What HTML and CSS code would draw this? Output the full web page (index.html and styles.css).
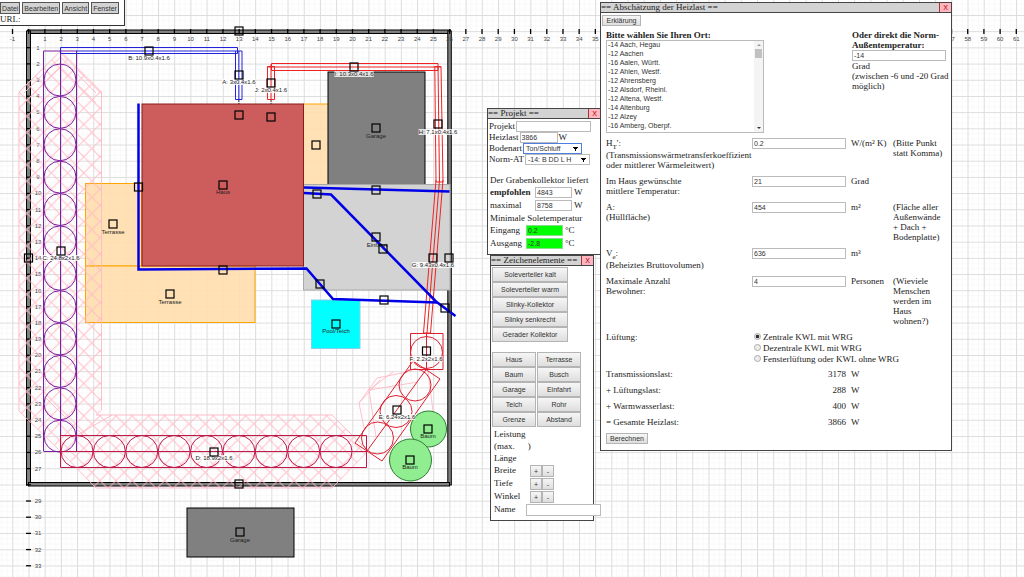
FILE: index.html
```html
<!DOCTYPE html>
<html lang="de">
<head>
  <meta charset="UTF-8" />
  <meta name="viewport" content="width=device-width, initial-scale=1.0"/>
  <title>Grabenkollektor Planer</title>
  <link rel="stylesheet" href="styles.css">
</head>
<body>
  <svg id="plan" class="plan">
    <defs>
      <pattern id="grid" x="28.5" y="31.2" width="16.19" height="16.19" patternUnits="userSpaceOnUse">
        <path class="grid-fine" d="M5.4 0V16.19M10.8 0V16.19M0 5.4H16.19M0 10.8H16.19"/>
        <path class="grid-line" d="M0.5 0V16.19M0 0.5H16.19"/>
      </pattern>
      <pattern id="hatch" x="19" y="92" width="16.19" height="16.19" patternUnits="userSpaceOnUse">
        <path class="frost" d="M0 0L16.19 16.19M16.19 0L0 16.19"/>
      </pattern>
    </defs>
    <rect width="100%" height="100%" fill="url(#grid)"/>

    <!-- Grundstücksgrenze -->
    <g class="border">
      <rect x="27.5" y="30" width="423" height="3.5"/>
      <rect x="26.5" y="31" width="4" height="454"/>
      <rect x="447.8" y="31" width="3.5" height="454"/>
      <rect x="28.5" y="482.5" width="421" height="3.5"/>
    </g>
    <g id="axis" class="axis"></g>

    <!-- Gebäude und Flächen -->
    <g class="terrace">
      <rect x="85.5" y="183.5" width="56" height="82.5"/>
      <rect x="85.5" y="266" width="169.5" height="56.5"/>
      <rect x="303.5" y="104" width="25" height="81"/>
    </g>
    <rect class="garage" x="328" y="72" width="97" height="113"/>
    <rect class="drive" x="303.5" y="184.5" width="146.5" height="105.5"/>
    <rect class="house" x="142" y="104" width="161.5" height="162"/>
    <rect class="pond" x="311.5" y="300" width="48.5" height="48.5"/>
    <rect class="garage" x="187" y="508" width="107" height="49"/>

    <!-- Frostbereich -->
    <path class="frost" fill="url(#hatch)" d="M60.5 51L101.5 92V410L96 415H332L368 451L332 488H96L60 451L19 411V92Z"/>
    <path class="frost" fill="none" d="M60.5 57L96 93M60.5 67L96 103M60.5 57L24 93M60.5 67L24 103M43 395L85 437M77 435L112 415"/>
    <path class="frost" fill="none" d="M412 371L377 378L359 403L364 428M418 382L369 390L376 437M369 390L393 372M433 411L428 371M359 403L380 380M421 437L433 411"/>

    <g class="tree">
      <circle cx="428.5" cy="429" r="18"/>
      <circle cx="410.5" cy="460" r="21"/>
    </g>

    <!-- Kollektoren -->
    <g id="slinkyC" class="slinky indigo"><path d="M43.5 51V451M60.5 51V451M76.5 51V451M43.5 51H76.5M43.5 451.5H77"/></g>
    <g id="slinkyD" class="slinky crimson"><path d="M60.5 435.5H366.5V467.5H60.5ZM60.5 451.5H366.5"/></g>
    <g class="slinky red">
      <path d="M410.5 333.5H443V369.5H410.5ZM426.5 333V369L367 451M413 361L440 379L382 461L355 443Z"/>
      <circle cx="426.5" cy="352.5" r="16"/>
      <circle cx="415" cy="385" r="16"/>
      <circle cx="396" cy="411.5" r="16"/>
      <circle cx="377.5" cy="438" r="16"/>
    </g>
    <path class="pipe cold" d="M60.5 53.5V47.5H237.5V53.5ZM76 51H242M235.5 51V99.5H242V51M238.8 51V99.5"/>
    <path class="pipe warm" d="M267.5 66.5V99.5H274.5V66.5ZM271 64V99.5M271.5 63.5H438V70.5H271.5ZM268 67H441M434.8 66.5L436 182H443L441 66.5ZM438 66.5L439.5 182M436 180L423.5 333M439.5 180L427 333M443 180L430.5 333M423.5 333H430.5"/>
    <path class="lead" d="M238.8 100V104M271 100V104"/>

    <g class="tube">
      <path d="M138.5 103.5V269.5L306.5 268.5L333 299L437 302.5"/>
      <path d="M304 187.5L449.5 191.5"/>
      <path d="M304 193L331 194.5L436 301.5L455.5 316"/>
    </g>
    <g id="labels"></g>
    <g id="handles" class="handles"></g>
  </svg>

  <nav class="menu">
    <button type="button">Datei</button>
    <button type="button">Bearbeiten</button>
    <button type="button">Ansicht</button>
    <button type="button">Fenster</button>
    <div>URL:</div>
  </nav>

  <section class="window project">
    <header><span>== Projekt ==</span><button type="button" class="close">X</button></header>
    <div class="line"><label for="projekt">Projekt</label><input id="projekt" class="wide"></div>
    <div class="line"><label for="heizlast">Heizlast</label><input id="heizlast" value="3866"> W</div>
    <div class="line"><label for="boden">Bodenart</label><select id="boden" class="active"><option>Ton/Schluff</option></select></div>
    <div class="line"><label for="norm">Norm-AT</label><select id="norm" class="long"><option>-14: B DD L H</option></select></div>
    <div class="caption">Der Grabenkollektor liefert</div>
    <div class="value"><label for="empf"><b>empfohlen</b></label><input id="empf" value="4843"> W</div>
    <div class="value"><label for="maxi">maximal</label><input id="maxi" value="8758"> W</div>
    <div class="caption small">Minimale Soletemperatur</div>
    <div class="value temp"><label for="ein">Eingang</label><input id="ein" value="0.2"> °C</div>
    <div class="value temp"><label for="aus">Ausgang</label><input id="aus" value="-2.8"> °C</div>
  </section>

  <section class="window tools">
    <header><span>== Zeichenelemente ==</span><button type="button" class="close">X</button></header>
    <div class="collectors">
      <button type="button">Soleverteiler kalt</button>
      <button type="button">Soleverteiler warm</button>
      <button type="button">Slinky-Kollektor</button>
      <button type="button">Slinky senkrecht</button>
      <button type="button">Gerader Kollektor</button>
    </div>
    <div class="objects">
      <button type="button">Haus</button><button type="button">Terrasse</button>
      <button type="button">Baum</button><button type="button">Busch</button>
      <button type="button">Garage</button><button type="button">Einfahrt</button>
      <button type="button">Teich</button><button type="button">Rohr</button>
      <button type="button">Grenze</button><button type="button">Abstand</button>
    </div>
    <div class="info">Leistung</div>
    <div class="info"><span>(max.</span><span>)</span></div>
    <div class="info">Länge</div>
    <div class="prop"><span>Breite</span><button type="button">+</button><button type="button">-</button></div>
    <div class="prop"><span>Tiefe</span><button type="button">+</button><button type="button">-</button></div>
    <div class="prop"><span>Winkel</span><button type="button">+</button><button type="button">-</button></div>
    <div class="prop"><label for="name">Name</label><input id="name"></div>
  </section>

  <section class="window load">
    <header><span>== Abschätzung der Heizlast ==</span><button type="button" class="close">X</button></header>
    <button type="button" class="explain">Erklärung</button>
    <form>
      <div class="place">
        <div class="town">
          <label for="ort"><b>Bitte wählen Sie Ihren Ort:</b></label>
          <div class="listbox">
            <select id="ort" size="10">
              <option>-14 Aach, Hegau</option>
              <option>-12 Aachen</option>
              <option>-16 Aalen, Württ.</option>
              <option>-12 Ahlen, Westf.</option>
              <option>-12 Ahrensberg</option>
              <option>-12 Alsdorf, Rheinl.</option>
              <option>-12 Altena, Westf.</option>
              <option>-14 Altenburg</option>
              <option>-12 Alzey</option>
              <option>-16 Amberg, Oberpf.</option>
            </select>
            <div class="scroll"><i class="up"></i><i class="thumb"></i><i class="down"></i></div>
          </div>
        </div>
        <div class="direct">
          <label for="aussen"><b>Oder direkt die Norm-Außentemperatur:</b></label>
          <input id="aussen" value="-14">
          <div>Grad<br>(zwischen -6 und -20 Grad möglich)</div>
        </div>
      </div>
      <div class="row">
        <label for="ht"><span class="sym">H<sub>T</sub>':</span>(Transmissionswärmetransferkoeffizient oder mittlerer Wärmeleitwert)</label>
        <input id="ht" value="0.2"><span>W/(m² K)</span><span>(Bitte Punkt statt Komma)</span>
      </div>
      <div class="row">
        <label for="innen">Im Haus gewünschte<br>mittlere Temperatur:</label>
        <input id="innen" value="21"><span>Grad</span>
      </div>
      <div class="row">
        <label for="flaeche">A:<br>(Hüllfläche)</label>
        <input id="flaeche" value="454"><span>m²</span><span>(Fläche aller Außenwände + Dach + Bodenplatte)</span>
      </div>
      <div class="row">
        <label for="vol"><span class="sym">V<sub>e</sub>:</span>(Beheiztes Bruttovolumen)</label>
        <input id="vol" value="636"><span>m³</span>
      </div>
      <div class="row">
        <label for="pers">Maximale Anzahl<br>Bewohner:</label>
        <input id="pers" value="4"><span>Personen</span><span>(Wieviele Menschen werden im Haus wohnen?)</span>
      </div>
      <div class="row">
        <span>Lüftung:</span>
        <div class="radios">
          <label><input type="radio" name="kwl" checked>Zentrale KWL mit WRG</label>
          <label><input type="radio" name="kwl">Dezentrale KWL mit WRG</label>
          <label><input type="radio" name="kwl">Fensterlüftung oder KWL ohne WRG</label>
        </div>
      </div>
      <div class="row"><span>Transmissionslast:</span><span class="num">3178</span><span>W</span></div>
      <div class="row"><span>+ Lüftungslast:</span><span class="num">288</span><span>W</span></div>
      <div class="row"><span>+ Warmwasserlast:</span><span class="num">400</span><span>W</span></div>
      <div class="row"><span>= Gesamte Heizlast:</span><span class="num">3866</span><span>W</span></div>
      <button type="button">Berechnen</button>
    </form>
  </section>

  <script>
    const NS = 'http://www.w3.org/2000/svg';
    const METER = 16.19;
    const ORIGIN = { x: 28.7, y: 31.5 };

    function add(parent, tag, attrs, text) {
      const el = document.createElementNS(NS, tag);
      for (const key in attrs) el.setAttribute(key, attrs[key]);
      if (text !== undefined) el.textContent = text;
      document.getElementById(parent).appendChild(el);
      return el;
    }

    // Achsen, keine Zahlen unter dem Heizlast-Fenster
    const load = document.querySelector('.load').getBoundingClientRect();
    for (let i = -1; i <= 61; i++) {
      const x = ORIGIN.x + i * METER;
      const covered = x > load.left && x < load.right - 4;
      add('axis', 'line', { x1: x, x2: x, y1: 29, y2: 34 });
      if (i !== 0 && !covered) add('axis', 'text', { x: x, y: 41 }, i);
    }
    for (let i = 1; i <= 33; i++) {
      const y = ORIGIN.y + i * METER;
      add('axis', 'line', { x1: 26, x2: 31, y1: y, y2: y });
      if (i !== 28) add('axis', 'text', { x: 38, y: y + 2 }, i);
    }

    // Schlingen
    for (let i = 0; i < 12; i++) add('slinkyC', 'circle', { cx: 60, cy: 80 + i * 2 * METER, r: 16 });
    for (let i = 0; i < 9; i++) add('slinkyD', 'circle', { cx: 77 + i * 2 * METER, cy: 451.5, r: 16 });

    // Beschriftung, boxed = weiss hinterlegt
    const labels = [
      ['A: 3x0.4x1.6', 239, 84, 1], ['B: 10.9x0.4x1.6', 149, 60, 1],
      ['C: 24.8x2x1.6', 61, 260, 1], ['D: 18.9x2x1.6', 214, 460, 1],
      ['E: 6.24x2x1.6', 397, 419, 1], ['F: 2.2x2x1.6', 426, 361, 1],
      ['G: 9.43x0.4x1.6', 433, 267, 1], ['H: 7.1x0.4x1.6', 438, 134, 1],
      ['I: 10.3x0.4x1.6', 354, 76, 1], ['J: 2x0.4x1.6', 271, 92, 1],
      ['Haus', 223, 194], ['Garage', 376, 138], ['Garage', 240, 542],
      ['Terrasse', 113, 234], ['Terrasse', 170, 304], ['Einfahrt', 377, 247],
      ['Pool/Teich', 336, 333], ['Baum', 428, 438], ['Baum', 410, 469]
    ];
    for (const [text, x, y, boxed] of labels) {
      const label = add('labels', 'text', { x: x, y: y, class: 'label' }, text);
      if (boxed) {
        const w = label.getComputedTextLength();
        const box = add('labels', 'rect', { x: x - w / 2, y: y - 5, width: w, height: 6, class: 'label-box' });
        label.before(box);
      }
    }

    // Griffe
    const handles = [
      [239, 31], [149, 51], [239, 75], [239, 115], [271, 83], [271, 117], [354, 67],
      [376, 128], [438, 124], [316, 145], [223, 185], [138.5, 187], [113, 224], [61, 251],
      [28.5, 258], [223, 270], [170, 294], [376, 190], [317, 194], [376, 237], [383, 249],
      [433, 258], [449, 258], [320, 284], [384, 300], [445, 308], [336, 324], [426.5, 351],
      [397, 410], [428, 429], [410, 460], [214, 452], [239, 484], [240, 532]
    ];
    for (const [x, y] of handles) add('handles', 'rect', { x: x - 4, y: y - 4, width: 8, height: 8 });
  </script>
</body>
</html>
```

FILE: styles.css
```css
* {
  box-sizing: border-box;
}
body {
  margin: 0;
  height: 100vh;
  overflow: hidden;
  background: #fff;
  color: #222;
  font: 9px/10px "Liberation Serif", "Times New Roman", serif;
}

/* Zeichnung */
.plan {
  display: block;
  width: 100%;
  height: 100%;
}
.grid-line { stroke: #dcdcdc; fill: none; }
.grid-fine { stroke: #f9f9f9; fill: none; }
.axis line { stroke: #000; stroke-width: 1.3; }
.axis text, .label {
  font: 6px "Liberation Sans", Arial, sans-serif;
  text-anchor: middle;
}
.axis text { fill: #444; }
.label { fill: #222; }
.label-box { fill: #fff; fill-opacity: 0.8; }
.border rect { fill: #808080; stroke: #000; }
.terrace rect { fill: #ffdead; fill-opacity: 0.9; stroke: #ffa500; }
.house { fill: #cd5c5c; stroke: #8b1a1a; }
.garage { fill: #808080; stroke: #000; }
.drive { fill: #d3d3d3; stroke: #a9a9a9; }
.pond { fill: #00ffff; stroke: #87ceeb; }
.tree circle { fill: #90ee90; stroke: #2e7d32; }
.frost { stroke: #ffb9c6; stroke-opacity: 0.9; }
.slinky { fill: none; }
.indigo { stroke: #7b1fa2; }
.crimson { stroke: #c2184a; }
.red { stroke: #dc2030; }
.pipe { fill: none; }
.cold { stroke: #2222dd; }
.warm { stroke: #ee2222; }
.lead { stroke: #333; stroke-dasharray: 2 1; }
.tube path { fill: none; stroke: #0000e6; stroke-width: 2.5; }
.handles rect { fill: none; stroke: #000; stroke-width: 1.2; }

/* Bedienelemente */
button, input, select {
  margin: 0;
  font: 7px/9px "Liberation Sans", Arial, sans-serif;
  color: #333;
}
button {
  padding: 0;
  border: 1px solid #b4b4b4;
  background: linear-gradient(#f6f6f6, #dedede);
}
input {
  height: 11px;
  padding: 0 1px;
  border: 1px solid #bbb;
  background: #fff;
}
select {
  appearance: none;
  height: 11px;
  padding: 0 2px;
  border: 1px solid #bbb;
  border-radius: 0;
  background: #fff conic-gradient(from -30deg at 50% 100%, #000 60deg, transparent 0) no-repeat right 3px center / 5px 4px;
}

.menu {
  position: absolute;
  top: 0;
  left: -1px;
  width: 126px;
  height: 26px;
  padding-top: 2px;
  border: 1px solid #333;
  border-top: none;
  background: #fff;
}
.menu button {
  height: 12px;
  padding: 0 1px;
  border-color: #555;
  background: #d3d3d3;
  float: left;
  margin-right: 2px;
}
.menu button:last-of-type {
  margin-right: 0;
}
.menu div {
  clear: both;
}

/* Fenster */
.window {
  position: absolute;
  border: 1px solid #444;
  background: #fff;
}
.window header {
  display: flex;
  justify-content: space-between;
  height: 10px;
  border-bottom: 1px solid #444;
  background: #d3d3d3;
  line-height: 9px;
}
.close {
  width: 12px;
  border: 0;
  border-left: 1px solid #a33;
  background: #ffb6c1;
  color: #a00;
}

.project {
  top: 108px;
  left: 487px;
  width: 114px;
  height: 147px;
}
.line {
  display: flex;
  gap: 1px;
  height: 11px;
  padding-left: 1px;
}
.project header + .line { margin-top: 2px; }
.line input { width: 38px; }
.line .wide { width: 75px; }
.line select { width: 59px; }
.line .long { width: 65px; }
.line .active { border-color: #4d7fe0; }
.caption {
  margin: 10px 0 2px 2px;
}
.caption.small {
  margin-top: 0;
  margin-bottom: 2px;
}
.value {
  display: flex;
  gap: 2px;
  height: 13px;
  padding-left: 2px;
}
.value label { width: 43px; }
.value input { width: 37px; }
.temp label { width: 34px; }
.temp input {
  border-color: #8d8;
  background: #00ff00;
}

.tools {
  top: 255px;
  left: 490px;
  width: 104px;
  height: 266px;
}
.collectors, .objects {
  display: grid;
  grid-auto-rows: 15px;
  margin: 1px 1px 10px;
}
.collectors { width: 76px; }
.objects {
  grid-template-columns: 44px 44px;
  column-gap: 1px;
  margin-bottom: 2px;
}
.info {
  display: flex;
  gap: 13px;
  height: 12px;
  padding-left: 3px;
}
.prop {
  display: flex;
  height: 13px;
  padding-left: 3px;
}
.prop span { width: 36px; }
.prop button {
  width: 12px;
  height: 12px;
}
.prop label {
  flex: none;
  width: 32px;
}
.prop input {
  flex: none;
  width: 75px;
  height: 12px;
}

.load {
  top: 2px;
  left: 600px;
  width: 352px;
  height: 449px;
}
.explain {
  display: block;
  width: 39px;
  height: 11px;
  margin: 2px 0 4px 1px;
}
.load form {
  padding-left: 5px;
}
.place {
  display: grid;
  grid-template-columns: 246px 98px;
  height: 108px;
}
.place label { display: block; }
.direct input { width: 94px; }
.listbox {
  position: relative;
  width: 158px;
  height: 93px;
}
.listbox select {
  width: 100%;
  height: 100%;
  padding: 0;
  background: #fff;
  overflow: hidden;
}
.listbox option {
  height: 9px;
  min-height: 0;
  padding: 0 1px;
  line-height: 9px;
}
.scroll {
  position: absolute;
  top: 1px;
  right: 1px;
  bottom: 1px;
  width: 9px;
  background: #f4f4f4;
}
.scroll i {
  display: block;
  width: 5px;
  margin: 3px auto;
  border: 2px solid transparent;
}
.scroll .up {
  width: 4px;
  border-top: 0;
  border-bottom-color: #999;
}
.scroll .thumb {
  width: 7px;
  height: 9px;
  border: 0;
  background: #c1c1c1;
}
.scroll .down {
  position: absolute;
  bottom: 0;
  left: 3px;
  width: 4px;
  border-bottom: 0;
  border-top-color: #333;
}
.row {
  display: grid;
  grid-template-columns: 141px 94px 37px 52px;
  column-gap: 5px;
  align-items: start;
  padding-bottom: 6px;
}
.row > :first-child { white-space: nowrap; }
.row label:first-child { white-space: normal; }
.row label[for="ht"] { margin-right: -5px; }
.sym {
  display: block;
  height: 12px;
}
sub {
  font-size: 7px;
  line-height: 0;
}
.row .num { text-align: right; }
.radios {
  grid-column: 2 / 5;
  margin: -1px 0;
}
.radios label {
  display: flex;
  gap: 2px;
  height: 11px;
  align-items: center;
}
.radios input {
  appearance: none;
  width: 7px;
  height: 7px;
  margin-left: 2px;
  padding: 0;
  border: 1px solid #aaa;
  border-radius: 50%;
  background: #eee;
}
.radios input:checked {
  background: radial-gradient(#333 40%, #eee 60%);
}
form > button {
  width: 42px;
  height: 11px;
}
```
